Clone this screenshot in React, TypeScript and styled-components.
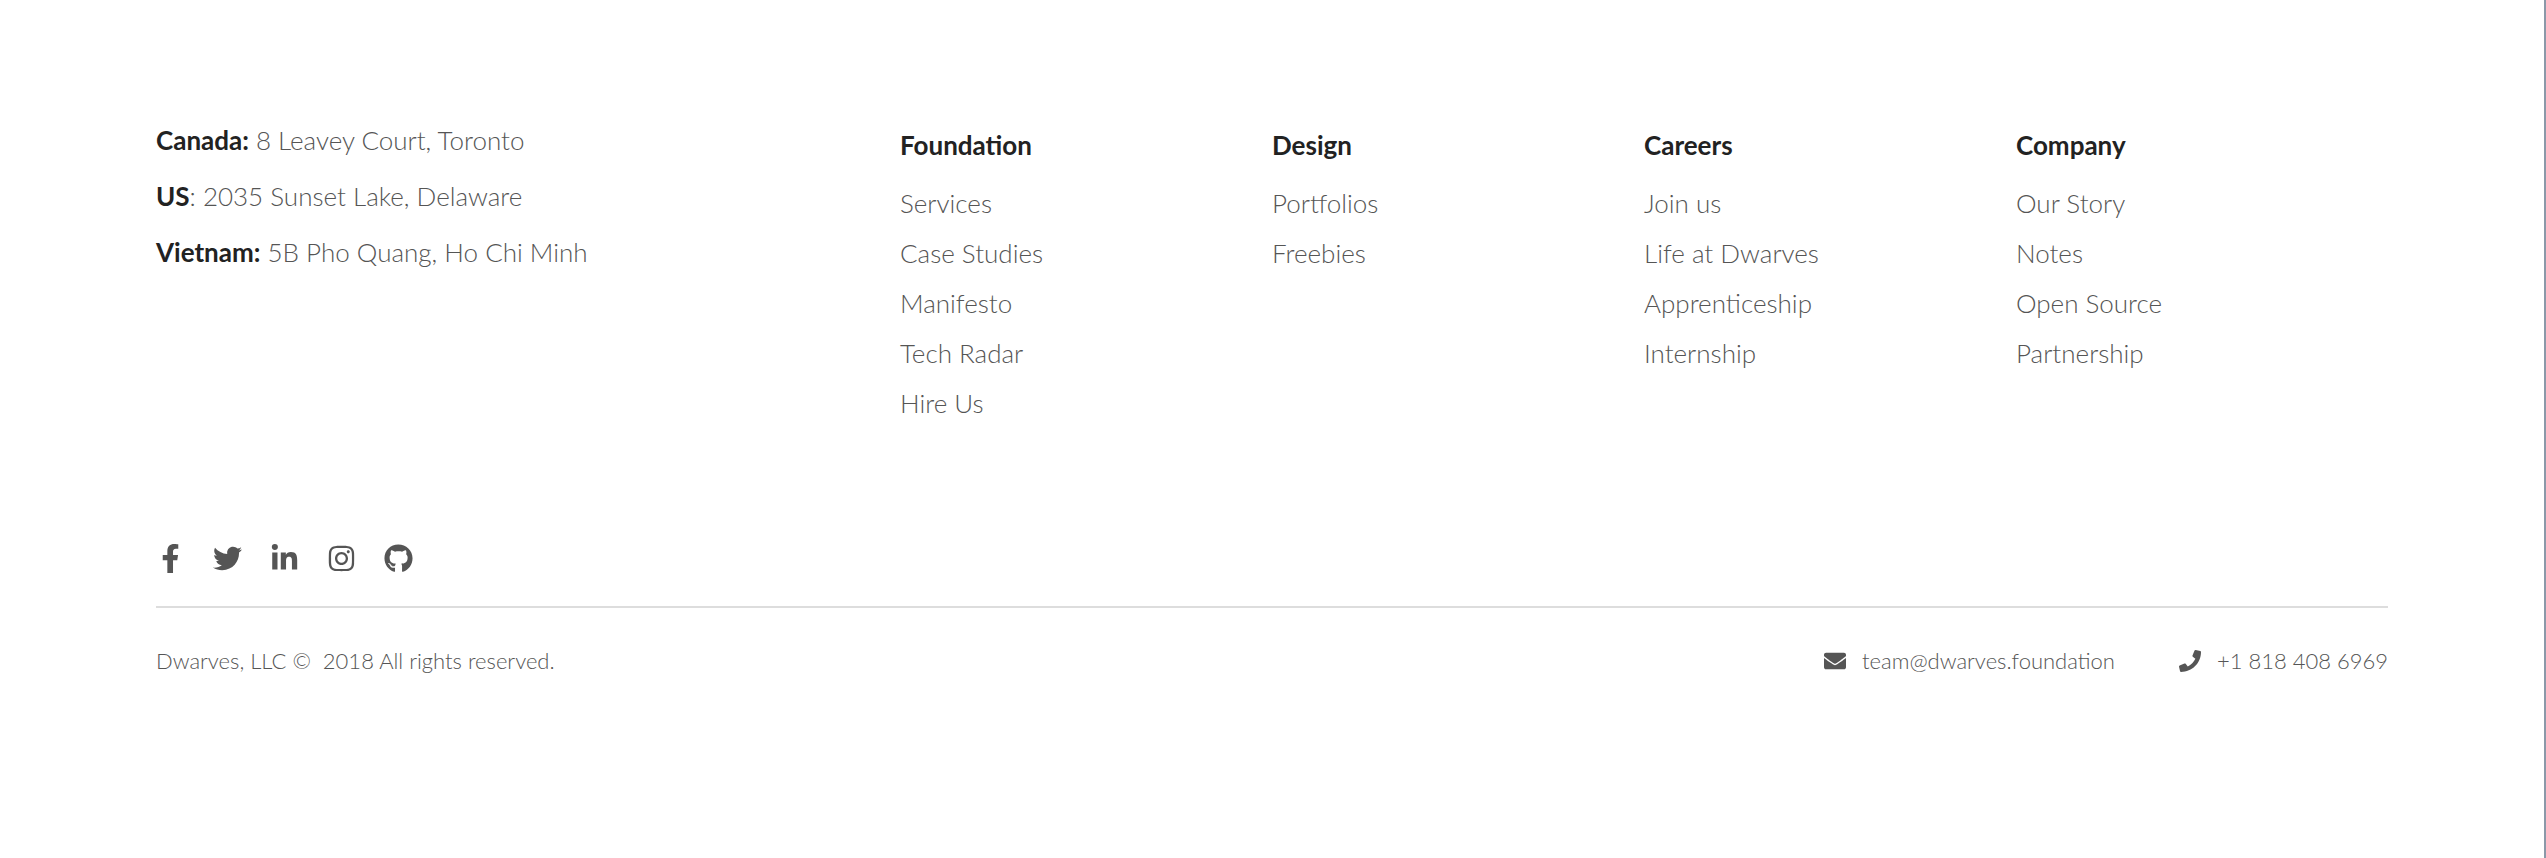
import React from 'react';
import styled, { createGlobalStyle } from 'styled-components';
import { FaFacebookF, FaTwitter, FaLinkedinIn, FaInstagram, FaGithub, FaEnvelope, FaPhone } from 'react-icons/fa';

const GlobalStyle = createGlobalStyle`
  * { box-sizing: border-box; }
  body { margin: 0; background: #fff; }
`;
const Footer = styled.footer`
  height: 858px;
  padding: 120px 156px 0;
  border-right: 2px solid #8b98a8;
  background: #fff;
  color: #555;
  font-family: Lato, sans-serif;
  font-weight: 300;
  font-size: 26px;
`;
const Top = styled.div`
  display: grid;
  grid-template-columns: 2fr 1fr 1fr 1fr 1fr;
  height: 424px;
`;
const Address = styled.p`
  margin: 0 0 16px;
  line-height: 40px;
  strong { font-weight: 700; color: #222; }
`;
const Heading = styled.h4`
  margin: 5px 0 18px;
  font-size: 26px;
  font-weight: 700;
  line-height: 40px;
  color: #222;
`;
const List = styled.ul`
  list-style: none;
  margin: 0;
  padding: 0;
`;
const Item = styled.li`
  height: 50px;
  line-height: 40px;
`;
const Socials = styled.div`
  display: flex;
  gap: 28px;
  height: 64px;
  border-bottom: 2px solid #ddd;
`;
const Bottom = styled.div`
  display: flex;
  justify-content: space-between;
  padding-top: 36px;
  font-size: 22px;
  line-height: 34px;
`;
const Contacts = styled.div`
  display: flex;
  gap: 64px;
`;
const Contact = styled.span`
  display: flex;
  align-items: center;
  gap: 16px;
`;

const columns = [
  { title: 'Foundation', items: ['Services', 'Case Studies', 'Manifesto', 'Tech Radar', 'Hire Us'] },
  { title: 'Design', items: ['Portfolios', 'Freebies'] },
  { title: 'Careers', items: ['Join us', 'Life at Dwarves', 'Apprenticeship', 'Internship'] },
  { title: 'Company', items: ['Our Story', 'Notes', 'Open Source', 'Partnership'] },
];

export default function App() {
  return (
    <Footer>
      <GlobalStyle />
      <Top>
        <div>
          <Address><strong>Canada:</strong> 8 Leavey Court, Toronto</Address>
          <Address><strong>US</strong>: 2035 Sunset Lake, Delaware</Address>
          <Address><strong>Vietnam:</strong> 5B Pho Quang, Ho Chi Minh</Address>
        </div>
        {columns.map((c) => (
          <div key={c.title}>
            <Heading>{c.title}</Heading>
            <List>{c.items.map((i) => <Item key={i}>{i}</Item>)}</List>
          </div>
        ))}
      </Top>
      <Socials>
        <FaFacebookF size={29} /><FaTwitter size={29} /><FaLinkedinIn size={29} /><FaInstagram size={29} /><FaGithub size={29} />
      </Socials>
      <Bottom>
        <span>Dwarves, LLC ©&nbsp; 2018 All rights reserved.</span>
        <Contacts>
          <Contact><FaEnvelope />team@dwarves.foundation</Contact>
          <Contact><FaPhone />+1 818 408 6969</Contact>
        </Contacts>
      </Bottom>
    </Footer>
  );
}
